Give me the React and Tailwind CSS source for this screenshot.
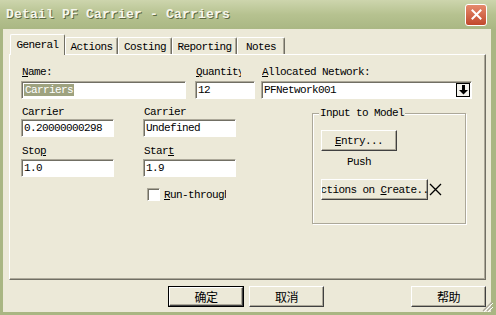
import React from 'react';

const MONO = "font-['Liberation_Mono','DejaVu_Sans_Mono',monospace] text-[11px] tracking-[-0.6px] leading-[12px] text-black";
const CJK = "font-['Noto_Sans_CJK_SC','Noto_Sans',sans-serif] text-[12px] text-black";

const sunken = 'bg-white border border-t-[#aca899] border-l-[#aca899] border-r-white border-b-white shadow-[inset_1px_1px_0_#716f64]';
const raised = 'bg-[#ece9d8] border border-t-white border-l-white border-r-[#404040] border-b-[#404040] shadow-[inset_-1px_-1px_0_#aca899]';

function Label({ children, w = '' }) {
  return <div className={`h-[12px] ml-px whitespace-nowrap overflow-hidden ${w}`}>{children}</div>;
}

function Field({ w, children, className = '' }) {
  return (
    <div className={`h-[18px] ${sunken} ${w} flex items-center pl-[2px] overflow-hidden whitespace-nowrap ${className}`}>
      {children}
    </div>
  );
}

function Tab({ w, active, children }) {
  if (active) {
    return (
      <div className={`${w} h-[21px] z-10 -mb-[1px] bg-[#ece9d8] border-t border-l border-t-white border-l-white border-r border-r-[#716f64] rounded-t-[2px] flex items-start justify-center pt-[4px]`}>
        {children}
      </div>
    );
  }
  return (
    <div className={`${w} h-[17px] bg-[#ece9d8] border-t border-l border-t-white border-l-white border-r border-r-[#716f64] shadow-[inset_-1px_0_0_#aca899] rounded-t-[2px] flex items-start justify-center pt-[3px]`}>
      {children}
    </div>
  );
}

function DropArrow() {
  return (
    <div className="w-[14px] h-[14px] bg-[#f4f3ee] border border-black flex items-center justify-center mr-[1px]">
      <svg width="9" height="10" viewBox="0 0 9 10">
        <rect x="3" y="0" width="3" height="5" fill="#000" />
        <polygon points="0,5 9,5 4.5,9.5" fill="#000" />
      </svg>
    </div>
  );
}

export default function App() {
  return (
    <div className={`relative w-[496px] h-[315px] flex flex-col bg-[#a9b683] overflow-hidden ${MONO}`}>
      {/* Title bar */}
      <div className="h-[29px] shrink-0 flex items-center justify-between pl-[6px] pr-[9px] bg-gradient-to-b from-[#cdd5ad] via-[#b6c290] to-[#aab784]">
        <div className="font-['Liberation_Mono',monospace] font-bold text-[13px] tracking-[0.2px] text-[#f6f6ec] [text-shadow:1px_1px_0_#5d6a42]">
          Detail PF Carrier - Carriers
        </div>
        <div className="w-[22px] h-[22px] rounded-[3px] border border-white bg-gradient-to-b from-[#e58a6c] to-[#c1482c] flex items-center justify-center">
          <svg width="11" height="11" viewBox="0 0 11 11">
            <path d="M1.5 1.5 L9.5 9.5 M9.5 1.5 L1.5 9.5" stroke="#fff" strokeWidth="2" strokeLinecap="square" />
          </svg>
        </div>
      </div>

      {/* Body */}
      <div className="flex-1 ml-[3px] mr-[5px] mb-[3px] bg-[#ece9d8] flex flex-col">
        {/* Tabs */}
        <div className="flex items-end ml-[7px] mt-[5px] h-[20px]">
          <Tab w="w-[55px]" active>General</Tab>
          <Tab w="w-[53px]">Actions</Tab>
          <Tab w="w-[54px]">Costing</Tab>
          <Tab w="w-[65px]">Reporting</Tab>
          <Tab w="w-[48px]">Notes</Tab>
        </div>

        {/* Panel */}
        <div className="ml-[6px] w-[477px] h-[226px] border border-t-white border-l-white border-r-[#716f64] border-b-[#716f64] shadow-[inset_-1px_-1px_0_#aca899] pt-[11px] pl-[11px]">
          <div className="flex">
            <div className="w-[165px]">
              <Label><span className="underline">N</span>ame:</Label>
              <Field w="w-[165px]" className="mt-[3px]">
                <span className="bg-[#9ea27f] text-white px-px">Carriers</span>
              </Field>
            </div>
            <div className="ml-[9px] w-[60px]">
              <Label w="w-[45px]"><span className="underline">Q</span>uantity</Label>
              <Field w="w-[60px]" className="mt-[3px]">12</Field>
            </div>
            <div className="ml-[6px] w-[211px]">
              <Label><span className="underline">A</span>llocated Network:</Label>
              <Field w="w-[211px]" className="mt-[3px] justify-between">
                <span>PFNetwork001</span>
                <DropArrow />
              </Field>
            </div>
          </div>

          <div className="flex">
            <div className="w-[291px] mt-[7px]">
              <div className="flex">
                <div className="w-[93px]">
                  <Label>Carrier</Label>
                  <Field w="w-[93px]" className="mt-px">0.20000000298</Field>
                </div>
                <div className="ml-[29px] w-[93px]">
                  <Label>Carrier</Label>
                  <Field w="w-[93px]" className="mt-px">Undefined</Field>
                </div>
              </div>
              <div className="flex mt-[8px]">
                <div className="w-[93px]">
                  <Label>Sto<span className="underline">p</span></Label>
                  <Field w="w-[93px]" className="mt-[2px]">1.0</Field>
                </div>
                <div className="ml-[29px] w-[93px]">
                  <Label>Star<span className="underline">t</span></Label>
                  <Field w="w-[93px]" className="mt-[2px]">1.9</Field>
                </div>
              </div>
              <div className="flex items-center mt-[11px] ml-[126px]">
                <div className={`w-[13px] h-[13px] ${sunken}`}></div>
                <div className="ml-[4px] w-[62px] overflow-hidden whitespace-nowrap">
                  <span className="underline">R</span>un-through
                </div>
              </div>
            </div>

            {/* Group box */}
            <div className="relative mt-[14px] w-[154px] h-[111px] border border-[#aca899] shadow-[inset_1px_1px_0_#fff,1px_1px_0_#fff]">
              <div className="absolute -top-[7px] left-[6px] px-[1px] bg-[#ece9d8]">Input to Model</div>
              <div className={`mt-[16px] ml-[8px] w-[76px] h-[21px] ${raised} flex items-center justify-center`}>
                <span><span className="underline">E</span>ntry...</span>
              </div>
              <div className="ml-[8px] w-[76px] mt-[5px] text-center">Push</div>
              <div className="flex items-center mt-[11px] ml-[8px]">
                <div className={`w-[107px] h-[21px] ${raised} flex items-center justify-center overflow-hidden whitespace-nowrap`}>
                  <span>Actions on <span className="underline">C</span>reate...</span>
                </div>
                <svg className="ml-[1px]" width="13" height="13" viewBox="0 0 13 13">
                  <path d="M1 1 L12 12 M12 1 L1 12" stroke="#000" strokeWidth="1.3" />
                </svg>
              </div>
            </div>
          </div>
        </div>

        {/* Bottom buttons */}
        <div className={`flex mt-[6px] ml-[165px] ${CJK}`}>
          <div className="w-[76px] h-[21px] border border-black">
            <div className={`w-full h-full ${raised} flex items-center justify-center`}>确定</div>
          </div>
          <div className={`ml-[5px] w-[75px] h-[21px] ${raised} flex items-center justify-center`}>取消</div>
          <div className={`ml-[87px] w-[75px] h-[21px] ${raised} flex items-center justify-center`}>帮助</div>
        </div>
      </div>

      {/* Resize grip */}
      <svg className="absolute right-[3px] bottom-[3px]" width="12" height="12" viewBox="0 0 12 12">
        <path d="M11 2 L2 11 M11 6 L6 11 M11 10 L10 11" stroke="#aca899" strokeWidth="1.2" />
        <path d="M12 3 L3 12 M12 7 L7 12" stroke="#fff" strokeWidth="1" />
      </svg>
    </div>
  );
}
